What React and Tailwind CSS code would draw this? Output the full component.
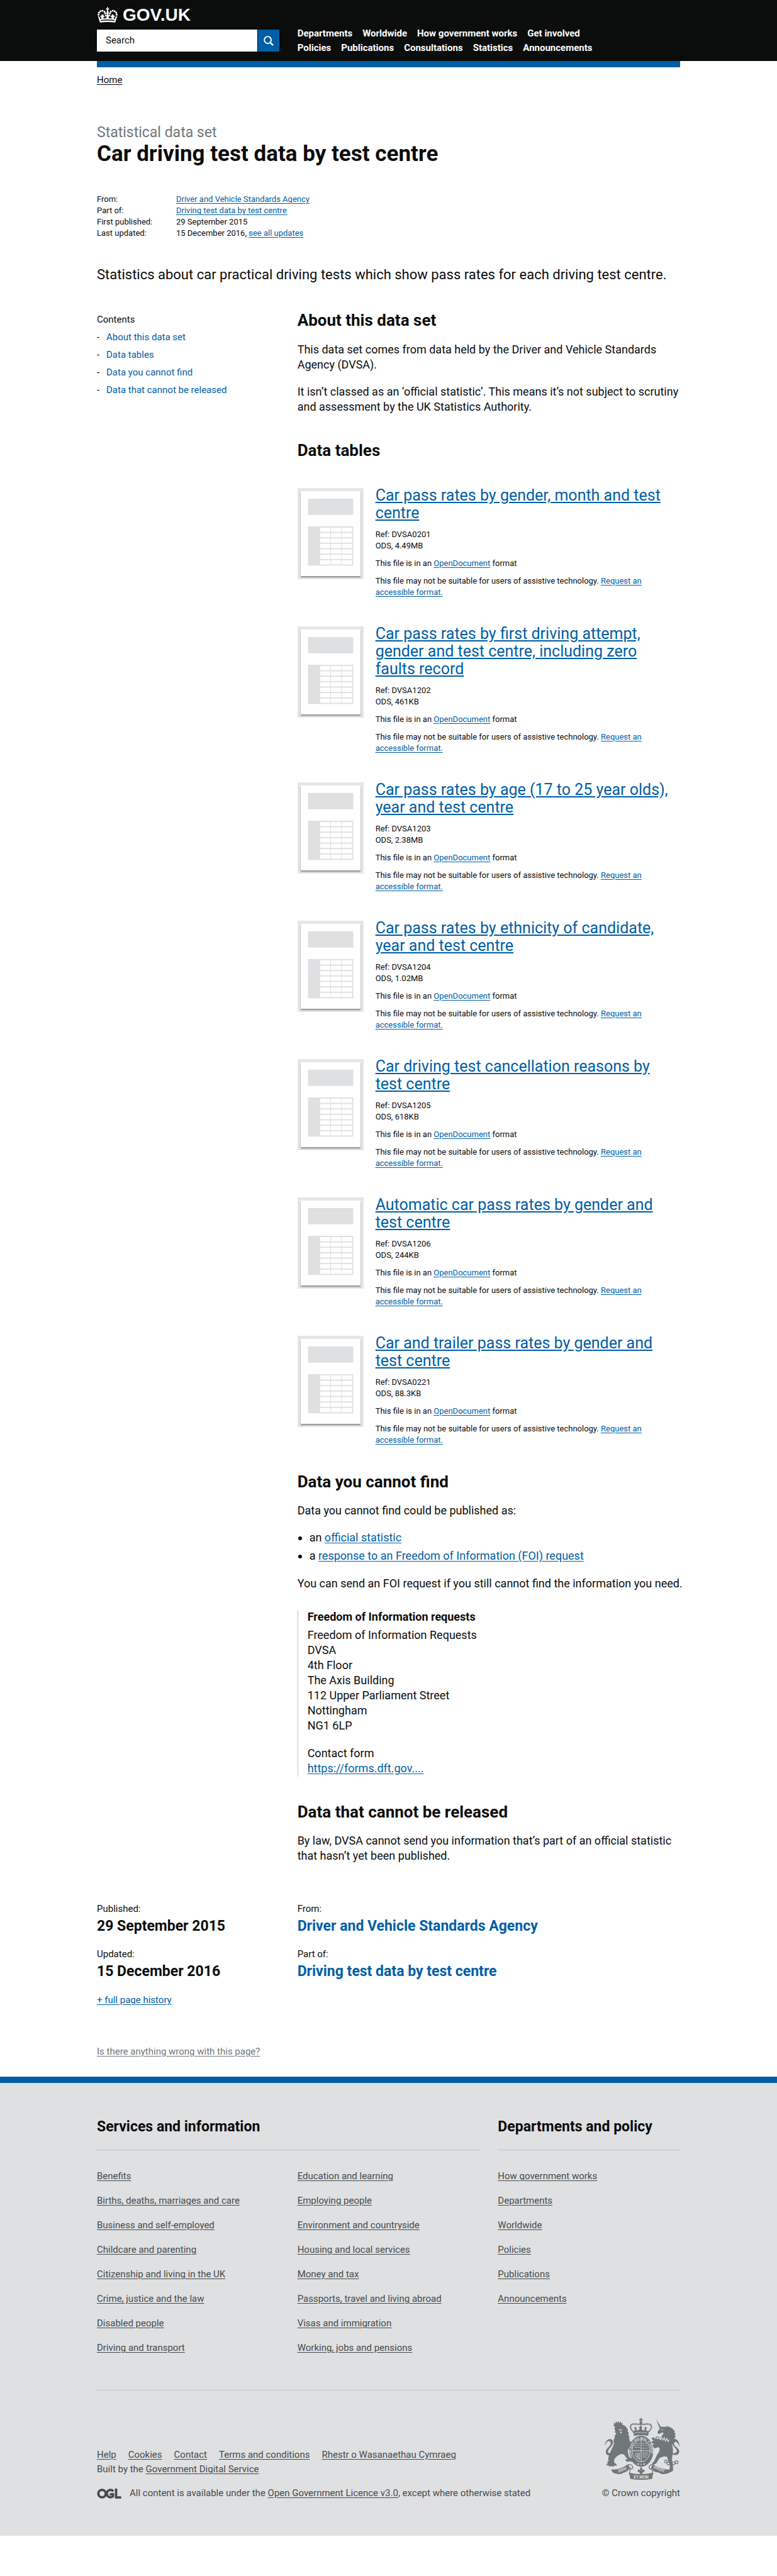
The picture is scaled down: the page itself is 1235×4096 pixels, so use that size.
import React from "react";

const wrap = "mx-auto w-full max-w-[927px]";
const link = "text-[#005ea5] underline underline-offset-2";

const navRows = [
  ["Departments", "Worldwide", "How government works", "Get involved"],
  ["Policies", "Publications", "Consultations", "Statistics", "Announcements"],
];

const contents = [
  ["About this data set", "#about"],
  ["Data tables", "#tables"],
  ["Data you cannot find", "#cannot-find"],
  ["Data that cannot be released", "#cannot-release"],
];

const files = [
  ["Car pass rates by gender, month and test centre", "DVSA0201", "4.49MB"],
  ["Car pass rates by first driving attempt, gender and test centre, including zero faults record", "DVSA1202", "461KB"],
  ["Car pass rates by age (17 to 25 year olds), year and test centre", "DVSA1203", "2.38MB"],
  ["Car pass rates by ethnicity of candidate, year and test centre", "DVSA1204", "1.02MB"],
  ["Car driving test cancellation reasons by test centre", "DVSA1205", "618KB"],
  ["Automatic car pass rates by gender and test centre", "DVSA1206", "244KB"],
  ["Car and trailer pass rates by gender and test centre", "DVSA0221", "88.3KB"],
];

const address = [
  "Freedom of Information Requests",
  "DVSA",
  "4th Floor",
  "The Axis Building",
  "112 Upper Parliament Street",
  "Nottingham",
  "NG1 6LP",
];

const services = [
  [
    "Benefits",
    "Births, deaths, marriages and care",
    "Business and self-employed",
    "Childcare and parenting",
    "Citizenship and living in the UK",
    "Crime, justice and the law",
    "Disabled people",
    "Driving and transport",
  ],
  [
    "Education and learning",
    "Employing people",
    "Environment and countryside",
    "Housing and local services",
    "Money and tax",
    "Passports, travel and living abroad",
    "Visas and immigration",
    "Working, jobs and pensions",
  ],
];

const policy = ["How government works", "Departments", "Worldwide", "Policies", "Publications", "Announcements"];
const meta = ["Help", "Cookies", "Contact", "Terms and conditions", "Rhestr o Wasanaethau Cymraeg"];

function Crown() {
  const dots = [
    [38, 75], [40, 65], [48, 58], [58, 55], [68, 60], [72, 69],
    [96, 69], [100, 60], [110, 55], [120, 58], [128, 65], [130, 75],
  ];
  return (
    <svg viewBox="30 36 108 80" className="h-[25px] w-[34px]" fill="#fff" aria-hidden="true">
      {dots.map(([x, y]) => (
        <circle key={x + "-" + y} cx={x} cy={y} r="5" />
      ))}
      <path d="M81 37h6l-1 7 6-1v7l-6-1 2 9a6 6 0 1 1-8 0l2-9-6 1v-7l6 1z" />
      <path d="M80 72l-3-4h14l-3 4 1 6 8-3v10l-8-2 3 14H76l3-14-8 2V75l8 3z" />
      <path d="M56 76l5-3 3 5-2 4 6-1v8l-6-1 2 8H51l2-9-6 1v-7l6 1-2-5z" />
      <path d="M112 76l-5-3-3 5 2 4-6-1v8l6-1-2 8h13l-2-9 6 1v-7l-6 1 2-5z" />
      <path d="M34 80l10 7 2 10q38-7 76 0l2-10 10-7-11 35q-39-5-78 0z" />
      <path d="M48 103q36-6 72 0l-1 4q-35-5-70 0z" fill="#0b0c0c" />
    </svg>
  );
}

function Thumbnail() {
  return (
    <div className="mt-[2px] h-[145px] w-[105px] shrink-0 border-[5px] border-[#e6e6e6] bg-white">
      <svg viewBox="0 0 99 140" className="h-full w-full overflow-visible shadow-[0_2px_2px_rgba(0,0,0,0.4)]" aria-hidden="true">
        <rect x="12" y="12" width="75" height="27" fill="#dee0e2" />
        <rect x="12" y="58" width="75" height="65" fill="#dee0e2" />
        {[0, 1, 2, 3, 4, 5, 6].map((r) =>
          [0, 1, 2].map((c) => (
            <rect key={r + "-" + c} x={32 + c * 18} y={60 + r * 9} width="17" height="7" fill="#fff" />
          ))
        )}
      </svg>
    </div>
  );
}

function Attachment({ title, code, size }) {
  return (
    <section className="mb-[43px] flex gap-[19px]">
      <Thumbnail />
      <div className="min-w-0 flex-1">
        <h3 className="text-[25px] leading-[28px]">
          <a href="#file" className={link}>{title}</a>
        </h3>
        <div className="mt-[11px] text-[13px] leading-[18px]">
          <p>Ref: {code}</p>
          <p>ODS, {size}</p>
          <p className="mt-[10px]">
            This file is in an <a href="#odf" className={link}>OpenDocument</a> format
          </p>
          <p className="mt-[10px] max-w-[440px]">
            This file may not be suitable for users of assistive technology.{" "}
            <a href="#request" className={link}>Request an accessible format.</a>
          </p>
        </div>
      </div>
    </section>
  );
}

function Crest() {
  const ink = "#6f777b";
  const paper = "#dee0e2";
  return (
    <svg viewBox="42 40 380 312" className="h-[100px] w-[122px]" role="img" aria-label="Royal coat of arms" fill={ink}>
      {/* lion */}
      <path d="M96 82l-2-18 8 6 4-12 6 10 4-12 5 12 7-10 2 12 7-5-3 18z" />
      <path d="M100 86l-4 12 6 6-5 10 9 2-10 20 4-2-8 18 2 14c-2 18-12 30-18 46-8 14-12 32-8 44l-6 2 0 12-8 6 14 2 4 6 10-4 8 4 8-6 10 2-2-8-10-8c-4-16 6-28 20-36 10-8 22-8 30-2 6 10 8 14 16 20l-12 4 8 10 14-3 10 3 10-6-6-12-14-2c-8-16-12-34-6-52 8-10 12-22 6-34l-3-14 2-6-6-8 3-10-7-8 3-8-6-8c-6-12-18-16-30-16-14-5-30-4-38 2z" />
      <path d="M168 168l10-10 10 2-4 10 8 6-8 12-14 8-14-2z" />
      <path d="M118 98l8 3 8-3 0 4-8 3-8-3zM124 110l10 0-3 8-5 0z" fill={paper} />
      <path d="M88 220c-22 14-34 6-34-10 0-16 16-22 22-34 6-14-2-22-12-18-6 4-12 14-15 22 0-14 8-28 20-32 12-4 22 4 20 18-2 16-22 28-24 42-2 10 8 12 22 2z" />
      {/* unicorn */}
      <path d="M303 47l24 40-7 5z" />
      <path d="M324 86l-4 12-10 14 3 9 8 0 12-7 8 3c-6 12-16 18-18 28l-10 4-12-2-8-8-12 2 2 8 10 4-10 4 0 10 10 4-8 8 6 10 8 4 14-6 8 6c0 12-4 20-14 34l-14 30-10 10 2 6 18-4 16-26c14-10 26-12 38-8 6 14 6 24 16 38l-4 26-8 8 16 4 10-6 0-26c-6-18-6-36-2-54 4-20 2-38-4-54l8-4-2-6 8-8-2-8 7-8-4-8 4-8-6-8 1-8-8-5-3-7-9-2-5-5-10 0 2-8-8 8z" />
      <path d="M318 142l6 8 6-12 6 14 8-12 5 16 8-12 4 16 8-10" fill="none" stroke={paper} strokeWidth="4" />
      <circle cx="334" cy="101" r="3" fill={paper} />
      <path d="M374 214c22 22 44 12 44-6 0-18-26-24-26-38 0-10 12-12 18-4 4 6 6 12 8 20 2-16-4-32-16-38-12-4-22 6-20 18 2 16 24 26 24 40 0 10-14 14-32 8z" />
      {[[352, 258], [364, 268], [377, 271], [390, 266], [405, 262], [310, 142], [371, 196], [300, 182]].map(([x, y]) => (
        <circle key={x} cx={x} cy={y} r="7" fill="none" stroke={ink} strokeWidth="3.5" />
      ))}
      {/* imperial crown */}
      <path d="M225 42h6v6h6v7h-6v8h-6v-8h-6v-7h6z" />
      <circle cx="228" cy="66" r="7" />
      <path d="M192 112c-24-20-18-40 0-40 14 0 28 4 36 0 8 4 22 0 36 0 18 0 24 20 0 40z" fill="none" stroke={ink} strokeWidth="7" strokeDasharray="6 1.5" />
      <path d="M228 74v30" stroke={ink} strokeWidth="6" strokeDasharray="6 2" />
      <path d="M196 108l3-12-6-4 8-6 7 7-4 5 5 8 5-6 4 4 4-10-5-6 9-6 10 6-6 6 5 10 4-4 5 6 4-8-4-5 7-7 8 6-6 4 4 12z" />
      <path d="M190 108q38-8 77 0l-3 23q-36-7-71 0z" />
      <path d="M196 117q32-6 65 0" stroke={paper} strokeWidth="3" fill="none" strokeDasharray="8 3" />
      {/* garter and shield */}
      <ellipse cx="229" cy="207" rx="60" ry="77" />
      <path id="garter" d="M186 240a49 62 0 1 1 86 0" fill="none" />
      <text fill={paper} fontSize="16" fontWeight="700" fontFamily="Roboto, sans-serif">
        <textPath href="#garter" startOffset="2">HONI SOIT QUI MAL Y PENSE</textPath>
      </text>
      <ellipse cx="229" cy="205" rx="44" ry="55" fill={ink} stroke={paper} strokeWidth="3" />
      <path d="M229 151v108M186 205h86" stroke={paper} strokeWidth="3" />
      <path d="M196 178h26M198 188h24M200 168h22M236 168h22M236 178h28M236 192h28" stroke={paper} strokeWidth="3" strokeDasharray="7 3 3 3" />
      <path d="M203 216c-6 12 0 24 18 32v-32M209 216v24M215 216v28M236 216h28M236 226h26M236 236h20" stroke={paper} strokeWidth="3" fill="none" strokeDasharray="9 2" />
      <path d="M210 268l4 5 5-4M229 270v6M248 268l-4 5-5-4" stroke={paper} strokeWidth="4" fill="none" />
      {/* motto ribbon */}
      <path d="M80 298q42 4 84-26l10 20q-10 14-26 20 8-4-18 8-24 4-42-8z" />
      <path d="M378 298q-42 4-92-26l-8 20q10 14 26 20 0-4 26 8 24 4 42-8z" />
      <path d="M164 274q20-2 24 12-2 10-12 12-6-6 2-10M292 274q-20-2-24 12 2 10 12 12 6-6-2-10" fill="none" stroke={ink} strokeWidth="4" />
      <path d="M170 314q58 14 118 0l-4 30q-54 10-109 0z" />
      <path d="M174 300l-4 22M284 300l4 22" stroke={ink} strokeWidth="4" />
      <path d="M229 284c-8 10-6 14-3 20-4-8-16-8-14 3 2 6 8 4 9 2-2 8 4 10 8 14 4-4 10-6 8-14 1 2 7 4 9-2 2-11-10-11-14-3 3-6 5-10-3-20z" />
      <g fill={paper} fontSize="20" fontWeight="700" fontFamily="Roboto, sans-serif" textAnchor="middle">
        <text x="137" y="305" transform="rotate(-24 137 301)">DIEU</text>
        <text x="229" y="342">ET MON</text>
        <text x="318" y="303" transform="rotate(24 318 299)">DROIT</text>
      </g>
    </svg>
  );
}

function OglLogo() {
  return (
    <svg viewBox="0 0 41 17" className="h-[16px] w-[39px] shrink-0" role="img" aria-label="OGL" fill="none" stroke="#454a4c">
      <circle cx="8.5" cy="8.5" r="6.3" strokeWidth="4" />
      <path d="M27.5 4.6A6.2 6.2 0 1 0 27 13V9.6H21.5" strokeWidth="4" />
      <path d="M32.2 0v15h8.6" strokeWidth="4" />
    </svg>
  );
}

function FooterLinks({ items }) {
  return (
    <ul className="flex flex-col gap-[19px]">
      {items.map((t) => (
        <li key={t}>
          <a href="#footer" className="underline underline-offset-2">{t}</a>
        </li>
      ))}
    </ul>
  );
}

function Fact({ label, children }) {
  return (
    <div>
      <dt className="text-[15px] leading-[20px]">{label}</dt>
      <dd className="mt-[4px] text-[23px] leading-[28px] font-bold">{children}</dd>
    </div>
  );
}

export default function App() {
  return (
    <div className="min-h-screen bg-white font-['Roboto',sans-serif] text-[#0b0c0c]">
      <header className="bg-[#0b0c0c] text-white">
        <div className={wrap + " grid grid-cols-3 items-end gap-x-[29px] pt-[11px] pb-[9px]"}>
          <div className="pb-[6px]">
            <a href="#home" className="flex h-[25px] items-center gap-[7px]" aria-label="GOV.UK">
              <Crown />
              <span className="font-['Liberation_Sans',sans-serif] text-[28px] leading-[25px] font-bold">GOV.UK</span>
            </a>
            <form className="mt-[11px] flex h-[35px] gap-px" onSubmit={(e) => e.preventDefault()}>
              <input
                type="text"
                aria-label="Search"
                placeholder="Search"
                className="min-w-0 flex-1 bg-white px-[14px] text-[15px] text-[#0b0c0c] placeholder:text-[#0b0c0c] placeholder:opacity-100"
              />
              <button type="submit" aria-label="Submit search" className="flex w-[34px] items-center justify-center bg-[#005ea5]">
                <svg viewBox="0 0 17 17" className="size-[16px]" fill="none" stroke="#fff" aria-hidden="true">
                  <circle cx="7" cy="7" r="5.8" strokeWidth="2" />
                  <path d="M11 11l5 5" strokeWidth="2.8" />
                </svg>
              </button>
            </form>
          </div>
          <nav className="col-span-2 text-[15px] leading-[23px] font-bold">
            {navRows.map((row) => (
              <ul key={row[0]} className="flex gap-[16px]">
                {row.map((t) => (
                  <li key={t}><a href="#nav">{t}</a></li>
                ))}
              </ul>
            ))}
          </nav>
        </div>
      </header>

      <div className={wrap}>
        <div className="h-[10px] bg-[#005ea5]" />
        <nav className="mt-[10px] text-[15px] leading-[20px]" aria-label="Breadcrumb">
          <a href="#home" className="underline underline-offset-2">Home</a>
        </nav>

        <main>
          <p className="mt-[60px] text-[23px] leading-[28px] text-[#6f777b]">Statistical data set</p>
          <h1 className="text-[35px] leading-[40px] font-bold">Car driving test data by test centre</h1>

          <dl className="mt-[43px] grid grid-cols-[126px_1fr] text-[13px] leading-[18px]">
            <dt>From:</dt>
            <dd><a href="#dvsa" className={link}>Driver and Vehicle Standards Agency</a></dd>
            <dt>Part of:</dt>
            <dd><a href="#collection" className={link}>Driving test data by test centre</a></dd>
            <dt>First published:</dt>
            <dd>29 September 2015</dd>
            <dt>Last updated:</dt>
            <dd>15 December 2016, <a href="#history" className={link}>see all updates</a></dd>
          </dl>

          <p className="mt-[42px] text-[22px] leading-[30px]">
            Statistics about car practical driving tests which show pass rates for each driving test centre.
          </p>

          <div className="mt-[43px] grid grid-cols-3 gap-x-[29px]">
            <nav className="pt-[3px] text-[15px] leading-[20px]" aria-labelledby="contents-title">
              <h2 id="contents-title">Contents</h2>
              <ul className="mt-[8px] flex flex-col gap-[8px]">
                {contents.map(([t, href]) => (
                  <li key={t} className="flex">
                    <span className="w-[15px]">-</span>
                    <a href={href} className="text-[#005ea5]">{t}</a>
                  </li>
                ))}
              </ul>
            </nav>

            <div className="col-span-2 text-[18px] leading-[24px]">
              <h2 id="about" className="text-[26px] leading-[28px] font-bold">About this data set</h2>
              <p className="mt-[21px]">
                This data set comes from data held by the Driver and Vehicle Standards Agency (DVSA).
              </p>
              <p className="mt-[19px]">
                It isn’t classed as an ‘official statistic’. This means it’s not subject to scrutiny and assessment by the UK
                Statistics Authority.
              </p>

              <h2 id="tables" className="mt-[43px] mb-[44px] text-[26px] leading-[28px] font-bold">Data tables</h2>
              {files.map(([title, code, size]) => (
                <Attachment key={code} title={title} code={code} size={size} />
              ))}

              <h2 id="cannot-find" className="text-[26px] leading-[28px] font-bold">Data you cannot find</h2>
              <p className="mt-[20px]">Data you cannot find could be published as:</p>
              <ul className="mt-[19px] flex list-disc flex-col gap-[5px] pl-[19px]">
                <li>an <a href="#statistic" className={link}>official statistic</a></li>
                <li>a <a href="#foi" className={link}>response to an Freedom of Information (FOI) request</a></li>
              </ul>
              <p className="mt-[20px] lg:whitespace-nowrap">You can send an FOI request if you still cannot find the information you need.</p>

              <section className="mt-[30px] border-l border-[#bfc1c3] pb-px pl-[15px]">
                <h3 className="leading-[22px] font-bold">Freedom of Information requests</h3>
                <address className="mt-[6px] not-italic">
                  {address.map((t) => (
                    <span key={t} className="block">{t}</span>
                  ))}
                </address>
                <p className="mt-[20px]">Contact form</p>
                <p><a href="#form" className={link}>https://forms.dft.gov....</a></p>
              </section>

              <h2 id="cannot-release" className="mt-[42px] text-[26px] leading-[28px] font-bold">Data that cannot be released</h2>
              <p className="mt-[20px]">
                By law, DVSA cannot send you information that’s part of an official statistic that hasn’t yet been published.
              </p>
            </div>
          </div>

          <div className="mt-[62px] grid grid-cols-3 gap-x-[29px]">
            <div>
              <dl className="flex flex-col gap-[20px]">
                <Fact label="Published:">29 September 2015</Fact>
                <Fact label="Updated:">15 December 2016</Fact>
              </dl>
              <a href="#history" className={link + " mt-[21px] block text-[15px] leading-[20px]"}>+ full page history</a>
            </div>
            <dl className="col-span-2 flex flex-col gap-[20px]">
              <Fact label="From:"><a href="#dvsa" className="text-[#005ea5]">Driver and Vehicle Standards Agency</a></Fact>
              <Fact label="Part of:"><a href="#collection" className="text-[#005ea5]">Driving test data by test centre</a></Fact>
            </dl>
          </div>
        </main>

        <p className="mt-[62px] mb-[30px] text-[15px] leading-[20px] text-[#6f777b]">
          <a href="#problem" className="underline underline-offset-2">Is there anything wrong with this page?</a>
        </p>
      </div>

      <footer className="border-t-[10px] border-[#005ea5] bg-[#dee0e2] pt-[56px] pb-[56px] text-[15px] leading-[20px] text-[#454a4c]">
        <div className={wrap}>
          <div className="grid grid-cols-3 gap-x-[29px]">
            <section className="col-span-2">
              <h2 className="border-b border-[#bfc1c3] pb-[22px] text-[23px] leading-[28px] font-bold text-[#0b0c0c]">
                Services and information
              </h2>
              <div className="mt-[31px] grid grid-cols-2 gap-x-[29px]">
                <FooterLinks items={services[0]} />
                <FooterLinks items={services[1]} />
              </div>
            </section>
            <section>
              <h2 className="border-b border-[#bfc1c3] pb-[22px] text-[23px] leading-[28px] font-bold text-[#0b0c0c]">
                Departments and policy
              </h2>
              <div className="mt-[31px]">
                <FooterLinks items={policy} />
              </div>
            </section>
          </div>

          <div className="mt-[57px] flex items-end justify-between border-t border-[#bfc1c3] pt-[43px] leading-[23px]">
            <div>
              <ul className="flex gap-[19px]">
                {meta.map((t) => (
                  <li key={t}><a href="#meta" className="underline underline-offset-2">{t}</a></li>
                ))}
              </ul>
              <p>Built by the <a href="#gds" className="underline underline-offset-2">Government Digital Service</a></p>
              <div className="mt-[15px] flex items-center gap-[13px]">
                <OglLogo />
                <p>
                  All content is available under the{" "}
                  <a href="#ogl" className="underline underline-offset-2">Open Government Licence v3.0</a>, except where
                  otherwise stated
                </p>
              </div>
            </div>
            <a href="#copyright" className="flex flex-col items-end gap-[9px]">
              <Crest />
              © Crown copyright
            </a>
          </div>
        </div>
      </footer>
    </div>
  );
}
